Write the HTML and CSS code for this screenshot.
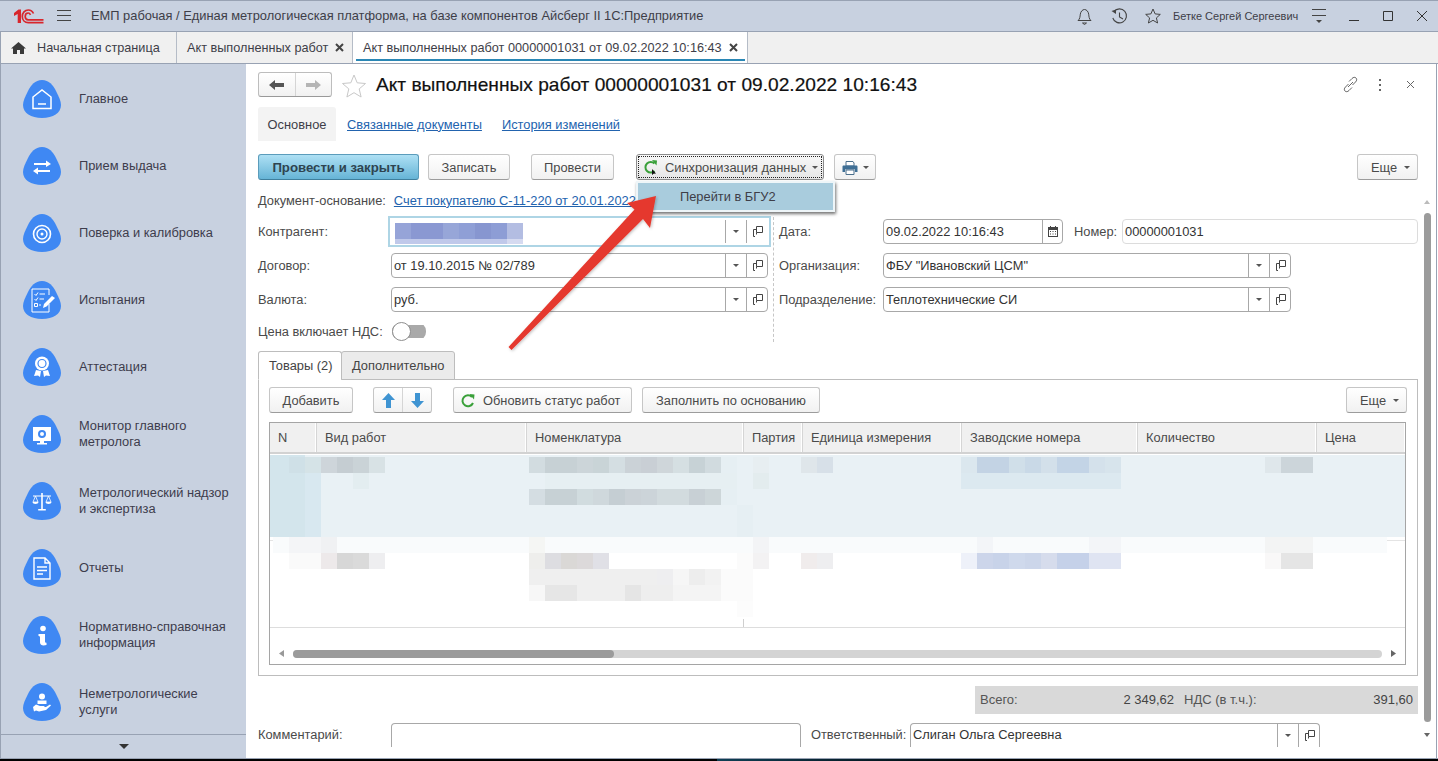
FILE: index.html
```html
<!DOCTYPE html>
<html lang="ru">
<head>
<meta charset="utf-8">
<title>Акт выполненных работ</title>
<link rel="stylesheet" href="styles.css">
</head>
<body>
<svg class="defs" width="0" height="0">
  <defs>
    <path id="blob" d="M19 0C26 0 30 5 33 11 36 17 38 21 38 25 38 33 30 38 19 38 8 38 0 33 0 25 0 21 2 17 5 11 8 5 12 0 19 0z" fill="#3f88f3"/>
    <g id="caret"><path d="M0 0h6L3 3z" fill="#555"/></g>
    <g id="copy" fill="none" stroke="#444" stroke-width="1"><path d="M4.500.5h6v6h-6z"/><path d="M4.500 3.500h-3v7h1.500M1.500 8.500"/><path d="M4.500 6.500v2"/></g>
  </defs>
</svg>
<div class="window">
  <header class="titlebar">
    <svg class="logo" width="30" height="15" viewBox="14 9 30 15"><path d="M14 13l4.500-3.500H21V23h-3.300v-9l-3.700 2z" fill="#d8262c"/><path d="M33.500 13.500C32.500 11.300 30.500 10 28.300 10 24.800 10 22.300 13 22.300 16.500S24.800 22.700 28.300 22.700H43.500M30.500 14.800C30 13.800 29.300 13 28.200 13 26.300 13 25.200 14.700 25.200 16.500S26.300 19.800 28.200 19.800H43.500" fill="none" stroke="#d8262c" stroke-width="1.700"/></svg>
    <svg class="burger" width="14" height="12" viewBox="0 0 14 12"><path d="M0 .5h14M0 5.500h14M0 10.500h14" stroke="#444" fill="none"/></svg>
    <span class="apptitle">ЕМП рабочая / Единая метрологическая платформа, на базе компонентов Айсберг II 1С:Предприятие</span>
    <svg class="t-bell" width="15" height="17" viewBox="0 0 15 17"><path d="M1 12.500c2-1.500 2-4 2.300-6.300C3.700 3.500 5.500 1.500 7.500 1.500s3.800 2 4.200 4.700c.3 2.300.3 4.800 2.300 6.300zM5.500 15h4l-2 1.500z" fill="none" stroke="#444"/></svg>
    <svg class="t-hist" width="17" height="17" viewBox="0 0 17 17"><path d="M3 3.500A7 7 0 1 1 1.800 10M8.500 4.500V9l3.500 2" fill="none" stroke="#444" stroke-width="1.100"/><path d="M.5 3l4.500-1.500V6z" fill="#444"/></svg>
    <svg class="t-star" width="16" height="16" viewBox="0 0 16 16"><path d="M8 1l2.100 4.900 5.200.5-3.900 3.500 1.200 5.100L8 12.300l-4.600 2.700 1.200-5.100L.7 6.400l5.200-.5z" fill="none" stroke="#444"/></svg>
    <span class="username">Бетке Сергей Сергеевич</span>
    <svg class="t-menu" width="14" height="14" viewBox="0 0 14 14"><path d="M0 .5h14M0 6.500h14" stroke="#444" fill="none"/><path d="M4 11h6l-3 3z" fill="#444"/></svg>
    <svg class="t-min" width="10" height="10" viewBox="0 0 10 10"><path d="M0 9.500h10" stroke="#333" fill="none"/></svg>
    <svg class="t-max" width="10" height="10" viewBox="0 0 10 10"><path d="M.5.500h9v9h-9z" stroke="#333" fill="none"/></svg>
    <svg class="t-close" width="12" height="12" viewBox="0 0 12 12"><path d="M1 1l10 10M11 1L1 11" stroke="#333" fill="none"/></svg>
  </header>

  <nav class="tabbar">
    <div class="tab tab-home">
      <svg width="15" height="12" viewBox="0 0 15 12"><path d="M7.500 0L15 6.500h-2V12H9V8H6v4H2V6.500H0z" fill="#3a3a3a"/></svg>
      <span>Начальная страница</span>
    </div>
    <div class="tab tab-doc">
      <span>Акт выполненных работ</span>
      <svg class="tabx" width="9" height="9" viewBox="0 0 9 9"><path d="M1 1l7 7M8 1L1 8" stroke="#444" stroke-width="2" fill="none"/></svg>
    </div>
    <div class="tab tab-active">
      <span>Акт выполненных работ 00000001031 от 09.02.2022 10:16:43</span>
      <svg class="tabx" width="9" height="9" viewBox="0 0 9 9"><path d="M1 1l7 7M8 1L1 8" stroke="#444" stroke-width="2" fill="none"/></svg>
    </div>
  </nav>

  <div class="main">
    <aside class="sidebar">
      <ul class="menu">
        <li class="item"><svg class="blob" viewBox="0 0 38 38"><use href="#blob"/><path d="M10 17l9-7 9 7v11.500H10zM15 24h8" fill="none" stroke="#fff" stroke-width="1.500"/></svg><span>Главное</span></li>
        <li class="item"><svg class="blob" viewBox="0 0 38 38"><use href="#blob"/><path d="M11 17h14M27 24H12" stroke="#fff" stroke-width="2" fill="none"/><path d="M23 13.500l5 3.500-5 3zM15 20.500L10 24l5 3.500z" fill="#fff"/></svg><span>Прием выдача</span></li>
        <li class="item"><svg class="blob" viewBox="0 0 38 38"><use href="#blob"/><circle cx="19" cy="20" r="8.500" fill="none" stroke="#fff" stroke-width="1.600"/><circle cx="19" cy="20" r="5" fill="none" stroke="#fff" stroke-width="1.400"/><circle cx="19" cy="20" r="1.500" fill="#fff"/></svg><span>Поверка и калибровка</span></li>
        <li class="item"><svg class="blob" viewBox="0 0 38 38"><use href="#blob"/><path d="M26 14V8H9v23h17v-8" fill="none" stroke="#fff"/><path d="M11.500 13l1.500 1.500 2-3M11.500 18l1.500 1.500 2-3M16.500 13H22M16.500 18H21M16 24h2M11.500 22.500h3v3h-3z" fill="none" stroke="#fff"/><path d="M20 27l1-4 8-8 3 2-8.500 8.500z" fill="#fff"/></svg><span>Испытания</span></li>
        <li class="item"><svg class="blob" viewBox="0 0 38 38"><use href="#blob"/><circle cx="19" cy="15.500" r="7" fill="#fff"/><circle cx="19" cy="15.500" r="4" fill="none" stroke="#3f88f3" stroke-width="1.200"/><path d="M13 22l-2 6 4-.5 2 1.500 1-6zM25 22l2 6-4-.5-2 1.500-1-6z" fill="#fff"/></svg><span>Аттестация</span></li>
        <li class="item"><svg class="blob" viewBox="0 0 38 38"><use href="#blob"/><path d="M10 12h18v14H10zM17 26h4v2h3v1.500H14V28h3z" fill="#fff"/><circle cx="19" cy="19" r="3" fill="none" stroke="#3f88f3" stroke-width="2"/></svg><span>Монитор главного<br>метролога</span></li>
        <li class="item"><svg class="blob" viewBox="0 0 38 38"><use href="#blob"/><path d="M18.200 11h1.600v16h3v1.500h-7.600V27h3zM10 13.500h18v1H10z" fill="#fff"/><path d="M12.500 14l-2.500 6h5zM25.500 14l-2.500 6h5z" fill="none" stroke="#fff" stroke-width=".8"/><path d="M9.500 20h6c0 2.500-6 2.500-6 0zM22.500 20h6c0 2.500-6 2.500-6 0z" fill="#fff"/></svg><span>Метрологический надзор<br>и экспертиза</span></li>
        <li class="item"><svg class="blob" viewBox="0 0 38 38"><use href="#blob"/><path d="M11 9h11l5 5v16H11zM22 9v5h5M14 18h10M14 21.500h10M14 25h6" fill="none" stroke="#fff" stroke-width="1.400"/></svg><span>Отчеты</span></li>
        <li class="item"><svg class="blob" viewBox="0 0 38 38"><use href="#blob"/><circle cx="20" cy="12.500" r="2.800" fill="#fff"/><path d="M15.500 18H22v7.500c0 1 .5 1.300 1.500 1.300V29c-3 .7-6.500.7-6.500-2.500v-5c0-1-.5-1.500-1.500-1.500z" fill="#fff"/></svg><span>Нормативно-справочная<br>информация</span></li>
        <li class="item"><svg class="blob" viewBox="0 0 38 38"><use href="#blob"/><circle cx="19" cy="13.500" r="3" fill="#fff"/><path d="M14.500 17.500h9V21h-9z" fill="#fff"/><path d="M10 24l3-2.500 4 1.500h3.500c1.500 0 1.500 1.500 0 1.500H17l6-.500 4-2.500 1 1-5 4.500-7 1.500-3-1-2 1z" fill="#fff"/></svg><span>Неметрологические<br>услуги</span></li>
      </ul>
      <div class="more-down"><svg width="10" height="5" viewBox="0 0 10 5"><path d="M0 0h10L5 5z" fill="#333"/></svg></div>
    </aside>

    <section class="doc">
      <div class="form">
        <div class="head">
          <div class="navgroup">
            <span class="navbtn"><svg width="15" height="10" viewBox="0 0 15 10"><path d="M0 5l6-5v3h9v4H6v3z" fill="#555"/></svg></span>
            <span class="navbtn"><svg width="15" height="10" viewBox="0 0 15 10"><path d="M15 5L9 0v3H0v4h9v3z" fill="#b5b5b5"/></svg></span>
          </div>
          <svg class="favstar" width="24" height="24" viewBox="0 0 24 24"><path d="M12 1l3.200 7.800 8.300.7-6.300 5.400 1.900 8.100L12 18.700 4.900 23l1.900-8.100L.5 9.500l8.300-.7z" fill="none" stroke="#c8c8c8"/></svg>
          <h1 class="doctitle">Акт выполненных работ 00000001031 от 09.02.2022 10:16:43</h1>
          <div class="headicons">
            <svg width="17" height="17" viewBox="0 0 17 17"><path d="M7 5.500l3-3c1.500-1.500 3-1.500 4-.5s1 2.500-.5 4l-3 3M10 11.500l-3 3c-1.500 1.500-3 1.500-4 .5s-1-2.500.5-4l3-3M6 11l5-5" fill="none" stroke="#666"/></svg>
            <svg width="4" height="12" viewBox="0 0 4 12"><path d="M1 0h2v2H1zM1 5h2v2H1zM1 10h2v2H1z" fill="#666"/></svg>
            <svg width="9" height="9" viewBox="0 0 9 9"><path d="M1 1l7 7M8 1L1 8" stroke="#666" fill="none"/></svg>
          </div>
        </div>

        <div class="pagetabs">
          <span class="pagetab-on">Основное</span>
          <a class="link pagelink">Связанные документы</a>
          <a class="link pagelink2">История изменений</a>
        </div>

        <div class="cmdbar">
          <button class="btn btn-primary">Провести и закрыть</button>
          <button class="btn btn-save">Записать</button>
          <button class="btn btn-post">Провести</button>
          <button class="btn btn-sync"><span class="dots">
            <svg class="syncicon" width="15" height="15" viewBox="0 0 15 15"><path d="M11.500 3.500A5.300 5.300 0 1 0 11.500 11" fill="none" stroke="#3aa03a" stroke-width="2"/><path d="M9 0l5 .5-.5 5z" fill="#3aa03a"/><path d="M9 9v6l1.500-1.300 2.500-.2z" fill="#111"/></svg>
            Синхронизация данных <svg class="caret" width="6" height="3" viewBox="0 0 6 3"><use href="#caret"/></svg></span></button>
          <button class="btn btn-print"><svg width="16" height="14" viewBox="0 0 16 14"><path d="M4 .5h7l1 1.500v3H4z" fill="#fff" stroke="#4b6f8c"/><path d="M1.500 4.500h13c.5 0 1 .5 1 1V11H13V8.500H3V11H.5V5.500c0-.5.5-1 1-1z" fill="#3f6f95"/><path d="M4 9h8v4.500H4z" fill="#fff" stroke="#4b6f8c"/></svg><svg class="caret" width="6" height="3" viewBox="0 0 6 3"><use href="#caret"/></svg></button>
          <button class="btn btn-more">Еще <svg class="caret" width="6" height="3" viewBox="0 0 6 3"><use href="#caret"/></svg></button>
        </div>

        <div class="basis"><span class="label">Документ-основание:</span><a class="link basislink">Счет покупателю С-11-220 от 20.01.2022</a></div>

        <div class="fields">
          <div class="col-left">
            <div class="row"><label class="label lw">Контрагент:</label>
              <div class="field wide focused"><div class="val"><svg class="masked" width="128" height="21" viewBox="0 0 128 21"><path fill="#96a4d8" d="M0 0h16v16H0z"/><path fill="#8a98d2" d="M16 0h32v16H16z"/><path fill="#97a6d8" d="M48 0h16v16H48z"/><path fill="#8f9fd6" d="M64 0h16v16H64z"/><path fill="#8796d0" d="M80 0h16v16H80z"/><path fill="#8d9dd5" d="M96 0h16v16H96z"/><path fill="#b3bde2" d="M112 0h16v16h-16z"/><path fill="#c0c9ea" d="M0 16h112v5H0z"/><path fill="#d5daf0" d="M112 16h16v5h-16z"/></svg></div>
                <span class="fbtn"><svg width="6" height="3" viewBox="0 0 6 3"><use href="#caret"/></svg></span><span class="fbtn"><svg width="11" height="11" viewBox="0 0 11 11"><use href="#copy"/></svg></span></div></div>
            <div class="row"><label class="label lw">Договор:</label>
              <div class="field wide"><div class="val">от 19.10.2015 № 02/789</div><span class="fbtn"><svg width="6" height="3" viewBox="0 0 6 3"><use href="#caret"/></svg></span><span class="fbtn"><svg width="11" height="11" viewBox="0 0 11 11"><use href="#copy"/></svg></span></div></div>
            <div class="row"><label class="label lw">Валюта:</label>
              <div class="field wide"><div class="val">руб.</div><span class="fbtn"><svg width="6" height="3" viewBox="0 0 6 3"><use href="#caret"/></svg></span><span class="fbtn"><svg width="11" height="11" viewBox="0 0 11 11"><use href="#copy"/></svg></span></div></div>
            <div class="row row-toggle"><label class="label lw">Цена включает НДС:</label><span class="toggle"><span class="knob"></span></span></div>
          </div>
          <div class="vsep"></div>
          <div class="col-right">
            <div class="row"><label class="label lr">Дата:</label>
              <div class="field date"><div class="val">09.02.2022 10:16:43</div><span class="fbtn"><svg width="10" height="11" viewBox="0 0 10 11"><path d="M0 1h2V0h1v1h4V0h1v1h2v10H0z" fill="#444"/><path d="M1 4h8v6H1z" fill="#fff"/><path d="M2 5h1v1H2zM4.500 5h1v1h-1zM7 5h1v1H7zM2 7.500h1v1H2zM4.500 7.500h1v1h-1zM7 7.500h1v1H7z" fill="#444"/></svg></span></div>
              <label class="label numlabel">Номер:</label>
              <div class="field number"><div class="val">00000001031</div></div></div>
            <div class="row"><label class="label lr">Организация:</label>
              <div class="field org"><div class="val">ФБУ "Ивановский ЦСМ"</div><span class="fbtn"><svg width="6" height="3" viewBox="0 0 6 3"><use href="#caret"/></svg></span><span class="fbtn"><svg width="11" height="11" viewBox="0 0 11 11"><use href="#copy"/></svg></span></div></div>
            <div class="row"><label class="label lr">Подразделение:</label>
              <div class="field org"><div class="val">Теплотехнические СИ</div><span class="fbtn"><svg width="6" height="3" viewBox="0 0 6 3"><use href="#caret"/></svg></span><span class="fbtn"><svg width="11" height="11" viewBox="0 0 11 11"><use href="#copy"/></svg></span></div></div>
          </div>
        </div>

        <div class="subtabs">
          <span class="subtab subtab-on">Товары (2)</span>
          <span class="subtab">Дополнительно</span>
        </div>
        <div class="panel">
          <div class="panelbar">
            <button class="btn btn-add">Добавить</button>
            <div class="updown">
              <span class="ud"><svg width="13" height="15" viewBox="0 0 13 15"><path d="M6.500 0L13 7H9v8H4V7H0z" fill="#3f94d2"/></svg></span>
              <span class="ud"><svg width="13" height="15" viewBox="0 0 13 15"><path d="M6.500 15L13 8H9V0H4v8H0z" fill="#3f94d2"/></svg></span>
            </div>
            <button class="btn btn-refresh"><svg width="14" height="14" viewBox="0 0 14 14"><path d="M11 3A5.500 5.500 0 1 0 12 9" fill="none" stroke="#3aa03a" stroke-width="2"/><path d="M8.500 0l5 .5-.5 5z" fill="#3aa03a"/></svg>Обновить статус работ</button>
            <button class="btn btn-fill">Заполнить по основанию</button>
            <button class="btn btn-more2">Еще <svg class="caret" width="6" height="3" viewBox="0 0 6 3"><use href="#caret"/></svg></button>
          </div>
          <div class="table">
            <div class="thead">
              <span>N</span><span>Вид работ</span><span>Номенклатура</span><span>Партия</span><span>Единица измерения</span><span>Заводские номера</span><span>Количество</span><span>Цена</span>
            </div>
            <svg class="tbody" width="1135" height="173" viewBox="270 454 1135 173">
              <path fill="#e9f1f5" d="M270 455h1135v82H270z"/>
              <path fill="#d3e5ec" d="M270 455h35v82h-35z"/>
              <path fill="#d8e8f0" d="M305 473h16v64h-16z"/>
              <path fill="#f9fbfc" d="M273 537h1114v16H273z"/>
              <path fill="#e4e4e4" d="M1387 540h18v1h-18zM270 540h3v1h-3z"/>
              <path fill="#cfe0e7" d="M289 457h16v16h-16z"/><path fill="#d5e3e7" d="M305 457h16v16h-16z"/><path fill="#ced5da" d="M321 457h16v16h-16z"/><path fill="#c5cdd2" d="M337 457h16v16h-16z"/><path fill="#cad3d7" d="M353 457h16v16h-16z"/><path fill="#d8e2e5" d="M369 457h16v16h-16z"/>
              <path fill="#d2dce0" d="M529 457h16v16h-16z"/><path fill="#c7d1d5" d="M545 457h32v16h-32z"/><path fill="#ccd5d9" d="M577 457h16v16h-16z"/><path fill="#c9d4d7" d="M593 457h16v16h-16z"/><path fill="#d4dee2" d="M609 457h16v16h-16z"/><path fill="#cbd2d7" d="M625 457h16v16h-16z"/><path fill="#c9cfd5" d="M641 457h16v16h-16z"/><path fill="#cfd6da" d="M657 457h16v16h-16z"/><path fill="#d5dfe2" d="M673 457h16v16h-16z"/><path fill="#c7d2d6" d="M689 457h16v16h-16z"/><path fill="#d1dbdf" d="M705 457h16v16h-16z"/><path fill="#e6eff3" d="M721 457h16v16h-16z"/>
              <path fill="#e7eef1" d="M753 457h16v16h-16z"/><path fill="#dfe6ea" d="M801 457h16v16h-16z"/><path fill="#d7e0e8" d="M817 457h16v16h-16z"/>
              <path fill="#dbe7ee" d="M961 457h16v16h-16z"/><path fill="#c3d3e4" d="M977 457h32v16h-32z"/><path fill="#d0dfe9" d="M1009 457h16v16h-16z"/><path fill="#c9d9e7" d="M1025 457h16v16h-16z"/><path fill="#d3e0ea" d="M1041 457h16v16h-16z"/><path fill="#c3d4e6" d="M1057 457h32v16h-32z"/><path fill="#d4e1eb" d="M1089 457h16v16h-16z"/><path fill="#d7e4ec" d="M1105 457h16v16h-16z"/>
              <path fill="#dfe7eb" d="M1265 457h16v16h-16z"/><path fill="#ccd5da" d="M1281 457h32v16h-32z"/>
              <path fill="#e3edf0" d="M353 473h16v16h-16z"/><path fill="#e6eff2" d="M545 473h192v16H545z"/><path fill="#e3ecee" d="M753 473h16v16h-16z"/><path fill="#dce9f0" d="M961 473h160v16H961z"/>
              <path fill="#d4dde2" d="M529 489h16v16h-16z"/><path fill="#c7d1d5" d="M545 489h32v16h-32z"/><path fill="#d1dcdf" d="M577 489h16v16h-16z"/><path fill="#cfd8dc" d="M593 489h16v16h-16z"/><path fill="#c5ced3" d="M609 489h16v16h-16z"/><path fill="#cbd2d7" d="M625 489h16v16h-16z"/><path fill="#ccd4d9" d="M641 489h16v16h-16z"/><path fill="#d2dbde" d="M657 489h32v16h-32z"/><path fill="#c8d0d5" d="M689 489h16v16h-16z"/><path fill="#cdd6d9" d="M705 489h16v16h-16z"/><path fill="#e6eff3" d="M721 489h16v16h-16z"/>
              <path fill="#e6eff3" d="M737 505h16v32h-16z"/>
              <path fill="#f4f5f7" d="M289 537h32v16h-32z"/><path fill="#f0f1f3" d="M321 537h16v16h-16z"/><path fill="#f5f6f4" d="M529 537h16v16h-16z"/><path fill="#f3f4f6" d="M753 537h16v16h-16z"/><path fill="#f3f5f8" d="M977 537h16v16h-16zM1089 537h32v16h-32z"/><path fill="#f3f4f4" d="M1265 537h48v16h-48z"/>
              <path fill="#fafafa" d="M289 553h32v16h-32z"/><path fill="#ede9ea" d="M321 553h16v16h-16z"/><path fill="#d7d7d7" d="M337 553h16v16h-16z"/><path fill="#dadada" d="M353 553h16v16h-16z"/><path fill="#eeeef0" d="M369 553h16v16h-16z"/>
              <path fill="#eeeeec" d="M529 553h16v16h-16z"/><path fill="#dddde1" d="M545 553h16v16h-16z"/><path fill="#dad8d6" d="M561 553h16v16h-16z"/><path fill="#dcd9da" d="M577 553h16v16h-16z"/><path fill="#e0e0e6" d="M593 553h16v16h-16z"/><path fill="#fbfbfb" d="M737 553h16v16h-16z"/><path fill="#f3f2f3" d="M753 553h16v16h-16z"/><path fill="#f0ecec" d="M801 553h16v16h-16z"/><path fill="#eeeef0" d="M817 553h16v16h-16z"/>
              <path fill="#eef1f9" d="M961 553h16v16h-16z"/><path fill="#ccd5ea" d="M977 553h16v16h-16z"/><path fill="#c8d3e9" d="M993 553h16v16h-16z"/><path fill="#cfd9ec" d="M1009 553h16v16h-16z"/><path fill="#ccd6ea" d="M1025 553h16v16h-16z"/><path fill="#d6dcec" d="M1041 553h16v16h-16z"/><path fill="#c5d1e9" d="M1057 553h32v16h-32z"/><path fill="#dfe4f2" d="M1089 553h32v16h-32z"/><path fill="#f9f8f8" d="M1265 553h16v16h-16z"/><path fill="#e5e5e5" d="M1281 553h32v16h-32z"/>
              <path fill="#efefef" d="M529 569h128v16H529z"/><path fill="#eeeef0" d="M657 569h16v16h-16z"/><path fill="#f6f6f6" d="M673 569h16v16h-16z"/><path fill="#ededed" d="M689 569h16v16h-16z"/><path fill="#f2f2f2" d="M705 569h16v16h-16z"/><path fill="#fbfbfb" d="M721 569h32v16h-32z"/>
              <path fill="#f7f7f7" d="M529 585h16v16h-16z"/><path fill="#e6e6e6" d="M545 585h32v16h-32z"/><path fill="#efefef" d="M577 585h48v16h-48z"/><path fill="#e5e5e5" d="M625 585h16v16h-16z"/><path fill="#eeeeee" d="M641 585h32v16h-32z"/><path fill="#f4f4f4" d="M673 585h48v16h-48z"/><path fill="#fbfbfb" d="M721 585h32v16h-32z"/>
              <path fill="#fcfcfc" d="M737 601h16v16h-16z"/>
              <path fill="#cfcfcf" d="M743 619h1v8h-1z"/>
            </svg>
            <div class="tfoot">
              <svg width="5" height="7" viewBox="0 0 5 7"><path d="M5 0v7L0 3.500z" fill="#999"/></svg>
              <div class="hscroll"><div class="hthumb"></div></div>
              <svg width="5" height="7" viewBox="0 0 5 7"><path d="M0 0v7l5-3.500z" fill="#666"/></svg>
            </div>
          </div>
        </div>

        <div class="totals">
          <span class="tl">Всего:</span><span class="tv">2 349,62</span><span class="tn">НДС (в т.ч.):</span><span class="tv2">391,60</span>
        </div>
        <div class="bottomrow">
          <label class="label lw">Комментарий:</label>
          <div class="field comment cut"></div>
          <label class="label resp">Ответственный:</label>
          <div class="field respf cut"><div class="val">Слиган Ольга Сергеевна</div><span class="fbtn"><svg width="6" height="3" viewBox="0 0 6 3"><use href="#caret"/></svg></span><span class="fbtn"><svg width="11" height="11" viewBox="0 0 11 11"><use href="#copy"/></svg></span></div>
        </div>
      </div>

      <div class="vscroll">
        <svg width="6" height="4" viewBox="0 0 6 4"><path d="M3 0l3 4H0z" fill="#bbb"/></svg>
        <div class="vthumb"></div>
        <svg class="vdown" width="6" height="4" viewBox="0 0 6 4"><path d="M3 4l3-4H0z" fill="#666"/></svg>
      </div>
    </section>
  </div>
  <div class="desk"></div>

  <div class="popup"><span>Перейти в БГУ2</span></div>
  <svg class="redarrow" width="170" height="170" viewBox="500 190 170 170">
    <defs><filter id="sh" x="-10%" y="-10%" width="120%" height="120%"><feDropShadow dx="1" dy="1" stdDeviation="1.500" flood-color="#000" flood-opacity=".25"/></filter></defs>
    <path d="M508.500 347L634.500 209.500 627 203 656 196 650 228 643 219 511.500 350z" fill="#e5392d" filter="url(#sh)"/>
  </svg>
</div>
</body>
</html>
```

FILE: styles.css
```css
* { box-sizing: border-box; }
html, body { margin: 0; padding: 0; }
body {
  font: 12.85px/16px "Liberation Sans", Arial, sans-serif;
  color: #4a4a4a;
  background: #fff;
  overflow: hidden;
}
.defs { position: absolute; }
svg { display: block; flex: none; }
.window {
  position: relative;
  width: 1438px;
  height: 761px;
  display: flex;
  flex-direction: column;
  overflow: hidden;
}

/* title bar */
.titlebar {
  height: 32px;
  flex: none;
  display: flex;
  align-items: center;
  background: #c8d1e0;
  border-top: 1px solid #98a2b3;
  border-bottom: 1px solid #98a2b3;
  color: #3e3e48;
  font-size: 12.86px;
}
.logo { margin-left: 14px; }
.burger { margin-left: 13px; }
.apptitle { margin-left: 20px; width: 612px; white-space: nowrap; }
.t-bell { margin-left: 374px; }
.t-hist { margin-left: 19px; }
.t-star { margin-left: 17px; }
.username { margin-left: 12px; width: 125px; white-space: nowrap; font-size: 11px; }
.t-menu { margin-left: 14px; }
.t-min { margin-left: 23px; }
.t-max { margin-left: 24px; }
.t-close { margin-left: 23px; }

/* window tabs */
.tabbar {
  height: 32px;
  flex: none;
  display: flex;
  background: #f0f0f0;
  border-bottom: 1px solid #98a2b3;
  border-left: 1px solid #98a2b3;
  color: #3e3e48;
  font-size: 12.7px;
}
.tab {
  display: flex;
  align-items: center;
  border-right: 1px solid #b5bcc7;
  white-space: nowrap;
}
.tab-home { width: 176px; padding-left: 10px; gap: 11px; }
.tab-doc { width: 176px; padding-left: 10px; justify-content: flex-start; }
.tab-doc .tabx { margin-left: 7px; }
.tab-active {
  width: 395px;
  padding-left: 10px;
  background: #fff;
  position: relative;
}
.tab-active .tabx { margin-left: 7px; }
.tab-active::after {
  content: "";
  position: absolute;
  left: 3px;
  right: 2px;
  bottom: 2px;
  height: 2px;
  background: #2a87b5;
}

/* main area */
.main {
  flex: 1;
  min-height: 0;
  display: flex;
  border-bottom: 1px solid #98a2b3;
  border-left: 1px solid #98a2b3;
}
.sidebar {
  width: 245px;
  flex: none;
  background: #c8d1e0;
  display: flex;
  flex-direction: column;
  padding-top: 1px;
  color: #3d3c4c;
}
.menu { list-style: none; margin: 0; padding: 0; height: 669px; }
.item {
  height: 67px;
  display: flex;
  align-items: center;
  padding-left: 22px;
  gap: 18px;
}
.blob { width: 38px; height: 38px; }
.more-down {
  flex: 1;
  border-top: 1px solid #98a2b3;
  display: flex;
  justify-content: center;
  align-items: center;
}

/* document */
.doc {
  flex: 1;
  min-width: 0;
  display: flex;
  background: #fff;
  border-right: 1px solid #98a2b3;
  margin-right: 1px;
}
.form {
  width: 1172px;
  flex: none;
  padding: 8px 0 0 12px;
  overflow: hidden;
}
.head { display: flex; align-items: center; height: 25px; }
.navgroup {
  width: 74px;
  height: 25px;
  display: flex;
  border: 1px solid #bdbdbd;
  border-bottom-color: #999;
  border-radius: 3px;
  background: linear-gradient(#fff, #f1f1f1);
}
.navbtn { flex: 1; display: flex; align-items: center; justify-content: center; }
.navbtn + .navbtn { border-left: 1px solid #d5d5d5; }
.favstar { margin-left: 10px; margin-top: 2px; }
.doctitle {
  margin: 0 0 0 10px;
  font-size: 19.15px;
  font-weight: 400;
  color: #111;
  white-space: nowrap;
  line-height: 25px;
  -webkit-text-stroke: .2px #111;
}
.headicons { margin-left: auto; display: flex; align-items: center; padding-right: 3px; }
.headicons svg:nth-child(1) { margin-right: 19px; }
.headicons svg:nth-child(2) { margin-right: 24px; }

.pagetabs { margin-top: 10px; height: 34px; display: flex; align-items: center; }
.pagetab-on {
  width: 78px;
  height: 34px;
  padding-top: 1px;
  background: #f3f3f3;
  border-radius: 3px 3px 0 0;
  display: flex;
  align-items: center;
  justify-content: center;
  color: #3e3e48;
}
.link { color: #2263ae; text-decoration: underline; white-space: nowrap; }
.pagelink { margin: 1px 0 0 11px; }
.pagelink2 { margin: 1px 0 0 20px; }

.cmdbar { margin-top: 13px; height: 26px; display: flex; }
.btn {
  height: 26px;
  padding: 1px 0 0;
  font: inherit;
  color: #4a4a4a;
  border: 1px solid #c6c6c6;
  border-bottom-color: #9c9c9c;
  border-radius: 3px;
  background: linear-gradient(#fff, #f1f1f1);
  display: flex;
  align-items: center;
  justify-content: center;
  white-space: nowrap;
}
.btn-primary {
  width: 161px;
  font-weight: 700;
  font-size: 13.2px;
  color: #2e4450;
  background: linear-gradient(#aee0f4, #66b4d6);
  border-color: #5b9cbb;
  border-bottom-color: #3f7f9d;
}
.btn-save { width: 82px; margin-left: 9px; }
.btn-post { width: 83px; margin-left: 21px; }
.btn-sync {
  width: 188px;
  margin-left: 22px;
  border-color: #8c8c8c;
  background: linear-gradient(#f8f8f8, #e6e6e6);
  padding: 1px;
}
.dots {
  width: 100%;
  height: 100%;
  border: 1px dotted #222;
  display: flex;
  align-items: center;
  padding: 1px 0 0 4px;
  gap: 7px;
}
.caret { display: inline-block; }
.dots .caret { margin-left: -1px; }
.btn-print { width: 42px; margin-left: 10px; gap: 5px; }
.btn-more { width: 61px; margin-left: auto; gap: 7px; padding-left: 6px; }

.basis { margin-top: 10px; height: 20px; display: flex; align-items: center; }
.label { white-space: nowrap; padding-top: 1px; }
.basislink { margin: 1px 0 0 8px; }

.fields { margin-top: 4px; display: flex; height: 132px; }
.col-left { width: 510px; flex: none; }
.vsep { width: 0; margin: 3px 0 0 5px; height: 125px; border-left: 1px dashed #c6c6c6; }
.col-right { margin-left: 5px; flex: 1; min-width: 0; }
.row { height: 34px; display: flex; align-items: center; }
.row-toggle { height: 30px; }
.lw { width: 133px; flex: none; }
.lr { width: 104px; flex: none; }
.field {
  height: 25px;
  display: flex;
  align-items: stretch;
  border: 1px solid #a8a8a8;
  border-radius: 4px;
  background: #fff;
  color: #333;
}
.val {
  flex: 1;
  min-width: 0;
  padding: 1px 2px 0;
  display: flex;
  align-items: center;
  white-space: nowrap;
}
.fbtn {
  width: 21px;
  flex: none;
  border-left: 1px solid #a8a8a8;
  display: flex;
  align-items: center;
  justify-content: center;
}
.wide { width: 377px; }
.focused {
  border-radius: 0;
  border-color: #fff;
  outline: 2px solid #aed5e5;
  outline-offset: 1px;
}
.masked { margin: 0 0 -4px 1px; }
.date { width: 180px; }
.date .fbtn { width: 20px; }
.numlabel { margin-left: 11px; width: 48px; flex: none; }
.number { width: 296px; border-color: #dcdcdc; }
.org { width: 408px; }

.toggle {
  width: 34px;
  height: 19px;
  margin-left: 1px;
  display: flex;
  align-items: center;
  background: linear-gradient(#a9a9a9, #a9a9a9) center / 100% 13px no-repeat;
  border-radius: 9px;
}
.knob {
  width: 19px;
  height: 19px;
  background: #fff;
  border: 1px solid #8e8e8e;
  border-radius: 50%;
}

.subtabs { margin-top: 5px; display: flex; height: 29px; position: relative; z-index: 1; }
.subtab {
  height: 29px;
  border: 1px solid #bdbdbd;
  border-radius: 3px 3px 0 0;
  background: #ebebeb;
  display: flex;
  align-items: center;
  padding: 0 10px;
  margin-left: -1px;
  width: 114px;
  color: #444;
  white-space: nowrap;
}
.subtab-on {
  width: 84px;
  margin-left: 0;
  background: #fff;
  border-bottom-color: #fff;
}
.panel {
  margin-top: -1px;
  width: 1160px;
  height: 297px;
  border: 1px solid #bdbdbd;
  padding: 7px 10px 0;
}
.panelbar { display: flex; height: 26px; }
.btn-add { width: 84px; }
.updown {
  margin-left: 20px;
  width: 59px;
  height: 26px;
  display: flex;
  border: 1px solid #c6c6c6;
  border-bottom-color: #9c9c9c;
  border-radius: 3px;
  background: linear-gradient(#fff, #f1f1f1);
}
.ud { flex: 1; display: flex; align-items: center; justify-content: center; }
.ud + .ud { border-left: 1px solid #d5d5d5; }
.btn-refresh { width: 179px; margin-left: 21px; gap: 8px; justify-content: flex-start; padding-left: 7px; }
.btn-fill { width: 178px; margin-left: 10px; }
.btn-more2 { width: 61px; margin-left: auto; gap: 7px; padding-left: 6px; }

.table {
  margin-top: 9px;
  width: 1137px;
  height: 243px;
  border: 1px solid #a5a5a5;
  display: flex;
  flex-direction: column;
}
.thead {
  height: 31px;
  flex: none;
  display: grid;
  grid-template-columns: 46px 210px 217px 59px 159px 176px 179px 89px;
  background: #f0f0f0;
  border-bottom: 2px solid #d2d2d2;
}
.thead span {
  display: flex;
  align-items: center;
  padding-left: 8px;
  border-right: 1px solid #fff;
  border-left: 1px solid #d5d5d5;
  white-space: nowrap;
}
.thead span:first-child { border-left: 0; }
.tbody { flex: none; }
.tfoot {
  flex: 1;
  border-top: 1px solid #dddddd;
  display: flex;
  align-items: center;
  padding: 15px 9px 0;
  gap: 9px;
}
.hscroll { flex: 1; height: 8px; background: #d4d4d4; border-radius: 4px; }
.hthumb { width: 321px; height: 8px; background: #9b9b9b; border-radius: 4px; }

.totals {
  margin: 10px 0 0 717px;
  width: 443px;
  height: 28px;
  background: #d9d9d9;
  display: flex;
  align-items: center;
  font-size: 13px;
  color: #444;
}
.tl { margin-left: 5px; width: 60px; color: #555; }
.tv { width: 134px; text-align: right; }
.tn { margin-left: 10px; width: 100px; white-space: nowrap; color: #555; }
.tv2 { margin-left: auto; margin-right: 5px; }

.bottomrow { margin-top: 9px; height: 24px; display: flex; align-items: flex-start; }
.bottomrow .label { line-height: 24px; padding-top: 0; }
.cut {
  height: 24px;
  border-bottom: 0;
  border-radius: 4px 4px 0 0;
}
.cut .val { padding-top: 0; padding-bottom: 2px; }
.comment { width: 410px; }
.resp { margin-left: 10px; width: 99px; flex: none; }
.respf { width: 410px; }

.vscroll {
  flex: 1;
  padding-top: 136px;
  display: flex;
  flex-direction: column;
  align-items: center;
}
.vthumb {
  margin-top: 9px;
  width: 7px;
  height: 509px;
  background: #9b9b9b;
  border-radius: 4px;
}
.vdown { margin-top: 11px; }

.desk {
  height: 2px;
  flex: none;
  background: linear-gradient(90deg, #000 717px, #0e3f55 717px, #0a2a3a 800px, #000 1000px);
}

/* overlays */
.popup {
  position: absolute;
  left: 636px;
  top: 181px;
  width: 199px;
  height: 31px;
  background: #a9ccdd;
  border: 2px solid #eef5f8;
  box-shadow: 1px 2px 3px rgba(0, 0, 0, .55);
  display: flex;
  align-items: center;
  padding-left: 42px;
  color: #3e3e48;
}
.redarrow { position: absolute; left: 500px; top: 190px; }
```
